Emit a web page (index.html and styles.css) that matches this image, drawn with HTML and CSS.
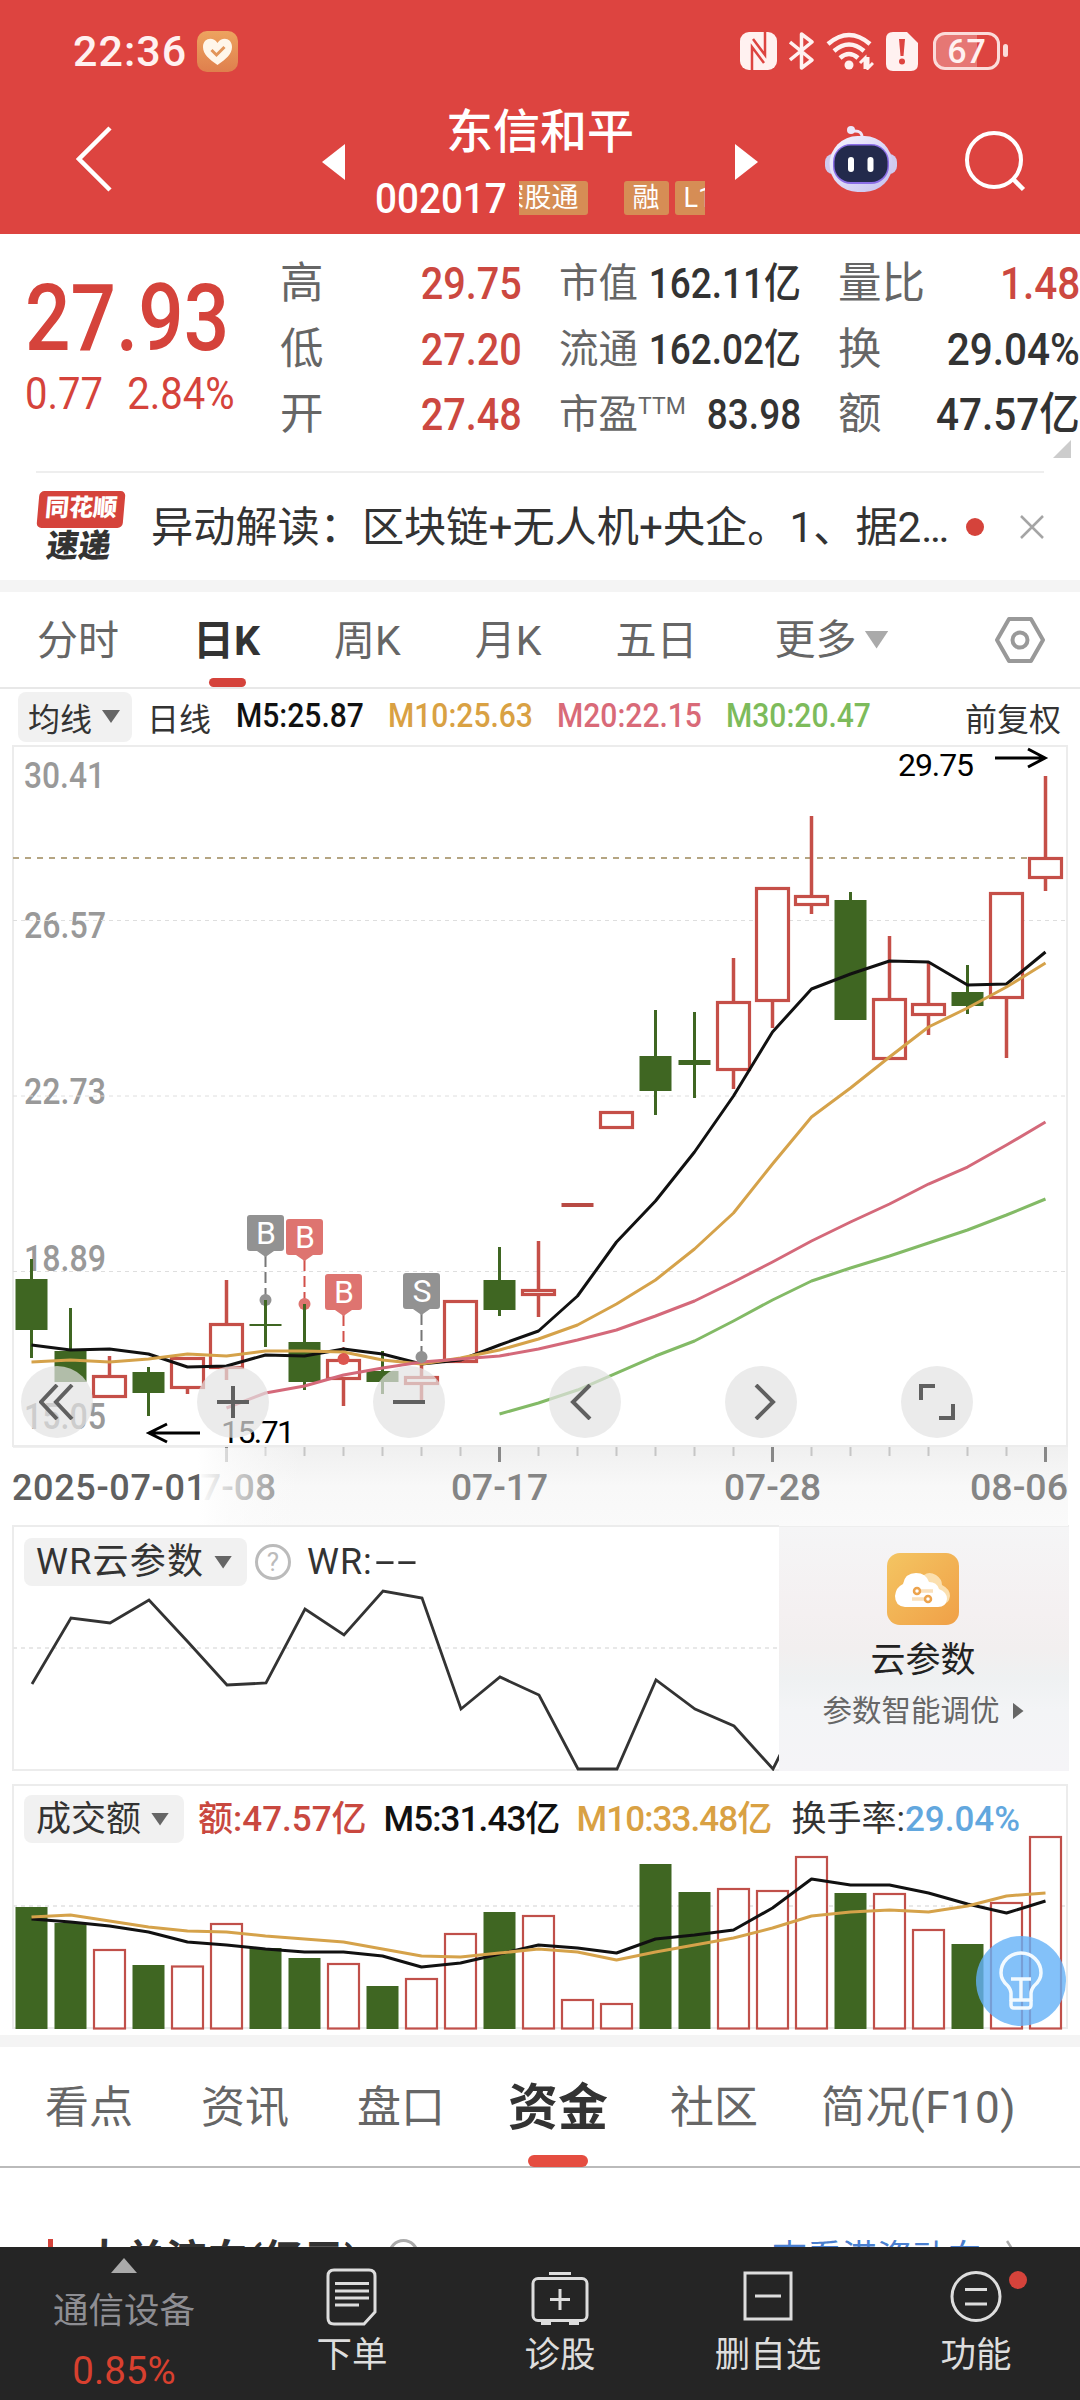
FILE: index.html
```html
<!DOCTYPE html>
<html lang="zh-CN">
<head>
    <meta charset="UTF-8">
    <meta name="viewport" content="width=device-width, initial-scale=1.0">
    <title>东信和平 002017</title>
    <link rel="stylesheet" href="styles.css">
</head>
<body>
    <header class="header">
        <div class="status-bar">
            <span class="time">22:36</span>
            <svg class="health" width="41" height="41" viewBox="0 0 41 41">
                <defs>
                    <linearGradient id="health-bg" x1="0" y1="0" x2="0" y2="1">
                        <stop offset="0" stop-color="#eda35f"/>
                        <stop offset="1" stop-color="#df7f4d"/>
                    </linearGradient>
                </defs>
                <rect width="41" height="41" rx="10" fill="url(#health-bg)"/>
                <path d="M20.500 34C12 28 6 23 6 16C6 7 16 5 20.500 12C25 5 35 7 35 16C35 23 29 28 20.500 34Z" fill="#fff6ea"/>
                <path d="M14.500 19l5 5 8-8" fill="none" stroke="#e2955a" stroke-width="3"/>
            </svg>
            <div class="status-icons">
                <svg width="37" height="38" viewBox="0 0 37 38">
                    <rect x="0" y="0" width="37" height="38" rx="9" fill="#fff1f0"/>
                    <path d="M12 38V15L24 31M25 0V23L13 7" fill="none" stroke="#dd4440" stroke-width="2.500"/>
                </svg>
                <svg width="25" height="38" viewBox="0 0 25 38">
                    <path d="M1 10L23 28L12.500 36V2L23 10L1 28" fill="none" stroke="#fff1f0" stroke-width="3.500" stroke-linejoin="round"/>
                </svg>
                <svg width="48" height="38" viewBox="0 0 48 38">
                    <g fill="none" stroke="#fff1f0" stroke-width="4.500">
                        <path d="M2 12Q23-6 44 12"/>
                        <path d="M8 19Q23 6 38 19"/>
                        <path d="M14 26Q23 18 32 26"/>
                    </g>
                    <circle cx="23" cy="33" r="4.500" fill="#fff1f0"/>
                    <path d="M34 31l5-5v11M42 25v11l5-5" fill="none" stroke="#fff1f0" stroke-width="3"/>
                </svg>
                <svg width="32" height="39" viewBox="0 0 32 39">
                    <path d="M7 0H21L32 11V32Q32 39 25 39H7Q0 39 0 32V7Q0 0 7 0Z" fill="#fff1f0"/>
                    <path d="M13 7H19L17.500 24H14.500Z" fill="#dd4440"/>
                    <circle cx="16" cy="29.500" r="3" fill="#dd4440"/>
                </svg>
                <div class="battery"><span>67</span></div>
            </div>
        </div>
        <div class="nav">
            <svg class="back" width="36" height="68" viewBox="0 0 36 68">
                <path d="M34 3L3 34L34 65" fill="none" stroke="#fff" stroke-width="4.500"/>
            </svg>
            <svg class="prev" width="23" height="36" viewBox="0 0 23 36"><path d="M23 0V36L0 18Z" fill="#fff"/></svg>
            <div class="stock">
                <h1>东信和平</h1>
                <div class="code">
                    <span class="num">002017</span>
                    <div class="tags">
                        <span class="tag first">深股通</span>
                        <span class="tag">融</span>
                        <span class="tag">L1</span>
                    </div>
                </div>
            </div>
            <svg class="next" width="23" height="36" viewBox="0 0 23 36"><path d="M0 0V36L23 18Z" fill="#fff"/></svg>
            <svg class="robot" width="72" height="68" viewBox="0 0 72 68">
                <defs>
                    <linearGradient id="robot-shell" x1="0" y1="0" x2="1" y2="1">
                        <stop offset="0" stop-color="#f6f4ff"/>
                        <stop offset="1" stop-color="#c4bfee"/>
                    </linearGradient>
                </defs>
                <path d="M37 13Q38 4 28 5" fill="none" stroke="#efe6f8" stroke-width="3"/>
                <circle cx="26" cy="4" r="4" fill="#ece8fb"/>
                <rect x="0" y="28" width="72" height="20" rx="8" fill="#d0cbee"/>
                <rect x="4.500" y="10" width="63" height="56" rx="28" fill="url(#robot-shell)"/>
                <rect x="8" y="18" width="56" height="40" rx="18" fill="#8a6de6"/>
                <rect x="9.500" y="19.500" width="53" height="36.500" rx="16" fill="#232a4c"/>
                <rect x="23" y="31" width="6" height="15" rx="3" fill="#fff"/>
                <rect x="42.500" y="31" width="6" height="15" rx="3" fill="#fff"/>
            </svg>
            <svg class="search" width="64" height="64" viewBox="0 0 64 64">
                <circle cx="30" cy="30" r="27" fill="none" stroke="#fff" stroke-width="4"/>
                <path d="M49 49L59.500 59.500" stroke="#fff" stroke-width="4.500"/>
            </svg>
        </div>
    </header>

    <section class="quote">
        <div class="price">
            <div class="last">27.93</div>
            <div class="change"><span>0.77</span><span>2.84%</span></div>
        </div>
        <dl class="col col-a">
            <div><dt>高</dt><dd class="up">29.75</dd></div>
            <div><dt>低</dt><dd class="up">27.20</dd></div>
            <div><dt>开</dt><dd class="up">27.48</dd></div>
        </dl>
        <dl class="col col-b">
            <div><dt>市值</dt><dd>162.11亿</dd></div>
            <div><dt>流通</dt><dd>162.02亿</dd></div>
            <div><dt>市盈<sup>TTM</sup></dt><dd>83.98</dd></div>
        </dl>
        <dl class="col col-c">
            <div><dt>量比</dt><dd class="up">1.48</dd></div>
            <div><dt>换</dt><dd>29.04%</dd></div>
            <div><dt>额</dt><dd>47.57亿</dd></div>
        </dl>
        <i class="expand"></i>
    </section>

    <section class="news">
        <div class="news-logo">
            <span class="logo-top">同花顺</span>
            <span class="logo-bottom">速递</span>
        </div>
        <p>异动解读：区块链+无人机+央企。1、据2<span>...</span></p>
        <i class="dot"></i>
        <svg width="24" height="24" viewBox="0 0 24 24"><path d="M1 1L23 23M23 1L1 23" stroke="#a5a5a5" stroke-width="2.500"/></svg>
    </section>

    <nav class="period-tabs">
        <a>分时</a>
        <a class="active">日K</a>
        <a>周K</a>
        <a>月K</a>
        <a>五日</a>
        <a class="more">更多<i class="caret"></i></a>
        <svg width="50" height="46" viewBox="0 0 50 46">
            <path d="M14 2H36L48 23L36 44H14L2 23Z" fill="none" stroke="#999" stroke-width="4" stroke-linejoin="round"/>
            <circle cx="25" cy="23" r="7.500" fill="none" stroke="#999" stroke-width="4"/>
        </svg>
    </nav>

    <div class="ma-row">
        <span class="pill">均线<i class="caret dark"></i></span>
        <span class="cycle">日线</span>
        <span class="ma m5">M5:25.87</span>
        <span class="ma m10">M10:25.63</span>
        <span class="ma m20">M20:22.15</span>
        <span class="ma m30">M30:20.47</span>
        <span class="adjust">前复权</span>
    </div>

    <section class="kline">
        <svg width="1080" height="782" viewBox="0 744 1080 782">
            <defs>
                <linearGradient id="axis-bg" x1="0" y1="0" x2="0" y2="1">
                    <stop offset="0" stop-color="#f0f0f0"/>
                    <stop offset=".5" stop-color="#f8f8f8"/>
                    <stop offset="1" stop-color="#fafafa"/>
                </linearGradient>
                <linearGradient id="axis-fade">
                    <stop offset="0" stop-color="#fff"/>
                    <stop offset=".64" stop-color="#fff"/>
                    <stop offset=".75" stop-color="#fdfdfd" stop-opacity=".65"/>
                    <stop offset="1" stop-color="#fafafa" stop-opacity="0"/>
                </linearGradient>
            </defs>
            <rect x="13" y="1447" width="1055" height="79" fill="url(#axis-bg)"/>

            <!-- frame and price grid -->
            <rect x="13" y="746" width="1054" height="700" fill="#fff" stroke="#ececec" stroke-width="2"/>
            <g class="axis-label">
                <text x="24" y="788" textLength="81" lengthAdjust="spacingAndGlyphs">30.41</text>
                <text x="24" y="938" textLength="82" lengthAdjust="spacingAndGlyphs">26.57</text>
                <text x="24" y="1104" textLength="82" lengthAdjust="spacingAndGlyphs">22.73</text>
                <text x="24" y="1271" textLength="82" lengthAdjust="spacingAndGlyphs">18.89</text>
                <text x="24" y="1429" textLength="82" lengthAdjust="spacingAndGlyphs">15.05</text>
            </g>
            <path d="M13 920.500H1066M13 1096H1066M13 1271.500H1066" stroke="#dedede" stroke-dasharray="4 4"/>
            <path d="M13 858H1028" stroke="#b5a582" stroke-width="2" stroke-dasharray="6 6"/>

            <!-- buy / sell leaders -->
            <g stroke-width="2" stroke-dasharray="11 5">
                <path d="M265.500 1256V1296M421.500 1314V1352" stroke="#777"/>
                <path d="M304.500 1260V1300M343.500 1315V1354" stroke="#d2504a"/>
            </g>
            <circle cx="265.500" cy="1300" r="6" fill="#929292"/>
            <circle cx="304.500" cy="1304" r="6" fill="#de7470"/>

            <!-- wicks -->
            <path d="M31.500 1259V1358M70.500 1308V1382M148.500 1367V1416M265.500 1300V1347M304.500 1304V1390M382.500 1351V1394M499.500 1247V1316M655.500 1010V1115M694.500 1012V1098M850.500 892V1020M967.500 965V1014" stroke="#3f6622" stroke-width="3"/>
            <path d="M109.500 1356V1376M187.500 1387V1394M226.500 1280V1380M343.500 1378V1406M421.500 1359V1402M538.500 1241V1317M733.500 958V1089M772.500 1000V1028M811.500 816V914M889.500 936V1000M928.500 962V1035M1006.500 997V1058M1045.500 776V891" stroke="#c54f48" stroke-width="3.500"/>

            <!-- bodies -->
            <g fill="#3f6622">
                <rect x="15.500" y="1279" width="32" height="51"/>
                <rect x="54.500" y="1351" width="32" height="31"/>
                <rect x="132.500" y="1372" width="32" height="21"/>
                <rect x="249.500" y="1324" width="32" height="2"/>
                <rect x="288.500" y="1342" width="32" height="40"/>
                <rect x="366.500" y="1371" width="32" height="11"/>
                <rect x="483.500" y="1280" width="32" height="30"/>
                <rect x="639.500" y="1056" width="32" height="35"/>
                <rect x="678.500" y="1060" width="32" height="5"/>
                <rect x="834.500" y="900" width="32" height="120"/>
                <rect x="951.500" y="992" width="32" height="14"/>
            </g>
            <g fill="#fff" stroke="#c54f48" stroke-width="3.200">
                <rect x="93.500" y="1376.500" width="32" height="20"/>
                <rect x="171.500" y="1358.500" width="32" height="29"/>
                <rect x="210.500" y="1324.500" width="32" height="43"/>
                <rect x="327.500" y="1360.500" width="32" height="18"/>
                <rect x="405.500" y="1377.500" width="32" height="6"/>
                <rect x="444.500" y="1301.500" width="32" height="60"/>
                <rect x="522.500" y="1290.500" width="32" height="4"/>
                <rect x="600.500" y="1112.500" width="32" height="15"/>
                <rect x="717.500" y="1002.500" width="32" height="67"/>
                <rect x="756.500" y="888.500" width="32" height="112"/>
                <rect x="795.500" y="896.500" width="32" height="8"/>
                <rect x="873.500" y="999.500" width="32" height="59"/>
                <rect x="912.500" y="1004.500" width="32" height="10"/>
                <rect x="990.500" y="893.500" width="32" height="104"/>
                <rect x="1029.500" y="858.500" width="32" height="19"/>
            </g>
            <rect x="561.500" y="1203" width="32" height="4" fill="#b84a44"/>

            <!-- moving averages -->
            <g fill="none" stroke-width="3" stroke-linejoin="round">
                <polyline stroke="#111" points="31.5,1345 70.5,1350 109.5,1349 148.5,1354 187.5,1367 226.5,1366 265.5,1355 304.5,1356 343.5,1349 382.5,1354 421.5,1364 460.5,1360 499.5,1345 538.5,1331 577.5,1296 616.5,1242 655.5,1201 694.5,1152 733.5,1096 772.5,1032 811.5,989 850.5,974 889.5,961 928.5,962 967.5,985 1006.5,984 1045.5,952"/>
                <polyline stroke="#d5a24a" points="31.5,1362 70.5,1360 109.5,1362 148.5,1359 187.5,1354 226.5,1356 265.5,1351 304.5,1351 343.5,1352 382.5,1360 421.5,1364 460.5,1358 499.5,1350 538.5,1339 577.5,1325 616.5,1304 655.5,1280 694.5,1249 733.5,1213 772.5,1164 811.5,1117 850.5,1088 889.5,1057 928.5,1027 967.5,1008 1006.5,987 1045.5,963"/>
                <polyline stroke="#d4697a" points="226.5,1408 265.5,1393 304.5,1386 343.5,1375 382.5,1368 421.5,1362 460.5,1359 499.5,1356 538.5,1349 577.5,1340 616.5,1330 655.5,1316 694.5,1301 733.5,1282 772.5,1262 811.5,1241 850.5,1222 889.5,1204 928.5,1184 967.5,1167 1006.5,1145 1045.5,1122"/>
                <polyline stroke="#83ba66" points="499.5,1414 538.5,1403 577.5,1390 616.5,1373 655.5,1356 694.5,1341 733.5,1321 772.5,1300 811.5,1281 850.5,1268 889.5,1256 928.5,1243 967.5,1230 1006.5,1215 1045.5,1199"/>
            </g>
            <circle cx="343.500" cy="1359" r="6" fill="#dc5650"/>
            <circle cx="421.500" cy="1357" r="6" fill="#929292"/>

            <!-- buy / sell flags -->
            <g fill="#929292">
                <path d="M250 1215h31q3 0 3 3v30q0 3-3 3h-7l-8.500 6-8.500-6h-7q-3 0-3-3v-30q0-3 3-3z"/>
                <path d="M406 1273h31q3 0 3 3v30q0 3-3 3h-7l-8.500 6-8.500-6h-7q-3 0-3-3v-30q0-3 3-3z"/>
            </g>
            <g fill="#de7470">
                <path d="M289 1219h31q3 0 3 3v30q0 3-3 3h-7l-8.500 6-8.500-6h-7q-3 0-3-3v-30q0-3 3-3z"/>
                <path d="M328 1274h31q3 0 3 3v30q0 3-3 3h-7l-8.500 6-8.500-6h-7q-3 0-3-3v-30q0-3 3-3z"/>
            </g>
            <g class="flag">
                <text x="266" y="1244">B</text>
                <text x="305" y="1248">B</text>
                <text x="344" y="1303">B</text>
                <text x="422" y="1302">S</text>
            </g>

            <!-- high and low -->
            <g class="extreme">
                <text x="898" y="776" textLength="76">29.75</text>
                <text x="221" y="1443" textLength="74">15.71</text>
            </g>
            <g fill="none" stroke="#000" stroke-width="3">
                <path d="M995 758H1044M1028 749L1045 758L1028 767"/>
                <path d="M200 1433H149M167 1424L149 1433L167 1442"/>
            </g>

            <!-- date axis -->
            <path d="M265.500 1447v9M304.500 1447v9M343.500 1447v9M382.500 1447v9M421.500 1447v9M460.500 1447v9M538.500 1447v9M577.500 1447v9M616.500 1447v9M655.500 1447v9M694.500 1447v9M733.500 1447v9M811.500 1447v9M850.500 1447v9M889.500 1447v9M928.500 1447v9M967.500 1447v9M1006.500 1447v9" stroke="#c6c6c6" stroke-width="2"/>
            <path d="M226.500 1447v15M499.500 1447v15M772.500 1447v15M1045.500 1447v15" stroke="#888" stroke-width="3"/>
            <g class="date">
                <text x="179" y="1500" textLength="97" lengthAdjust="spacingAndGlyphs">07-08</text>
                <text x="451" y="1500" textLength="97" lengthAdjust="spacingAndGlyphs">07-17</text>
                <text x="724" y="1500" textLength="97" lengthAdjust="spacingAndGlyphs">07-28</text>
                <text x="970" y="1500" textLength="98" lengthAdjust="spacingAndGlyphs">08-06</text>
            </g>
            <rect x="12" y="1448" width="290" height="77" fill="url(#axis-fade)"/>
            <text class="date first" x="12" y="1500" textLength="194">2025-07-01</text>
        </svg>
        <div class="chart-tools">
            <span><svg width="36" height="36" viewBox="0 0 36 36"><path d="M18 1L2 18L18 35M33 1L17 18L33 35"/></svg></span>
            <span><svg width="36" height="36" viewBox="0 0 36 36"><path d="M18 2V34M2 18H34"/></svg></span>
            <span><svg width="36" height="36" viewBox="0 0 36 36"><path d="M2 18H34"/></svg></span>
            <span><svg width="36" height="36" viewBox="0 0 36 36"><path d="M23 1L6 18L23 35"/></svg></span>
            <span><svg width="36" height="36" viewBox="0 0 36 36"><path d="M13 1L30 18L13 35"/></svg></span>
            <span><svg width="36" height="36" viewBox="0 0 36 36"><path d="M2 16V2H16M34 20V34H20"/></svg></span>
        </div>
    </section>

    <section class="wr">
        <div class="wr-chart">
            <svg width="766" height="245" viewBox="13 1526 766 245">
                <path d="M13 1648H779" stroke="#e8e8e8" stroke-width="2" stroke-dasharray="4 4"/>
                <polyline fill="none" stroke="#333" stroke-width="2.800" points="32,1684 71,1618 110,1623 149,1600 188,1642 227,1685 266,1683 305,1609 344,1635 383,1591 422,1598 461,1709 500,1677 539,1695 578,1769 617,1769 656,1680 695,1709 734,1726 773,1769 781,1753"/>
            </svg>
            <div class="wr-head">
                <span class="pill">WR云参数<i class="caret dark"></i></span>
                <span class="help">?</span>
                <span class="wr-value">WR:<b>--</b></span>
            </div>
        </div>
        <div class="cloud">
            <svg width="72" height="72" viewBox="0 0 72 72">
                <defs>
                    <linearGradient id="cloud-bg" x1="0" y1="0" x2="1" y2="1">
                        <stop offset="0" stop-color="#f4c562"/>
                        <stop offset="1" stop-color="#f0a047"/>
                    </linearGradient>
                </defs>
                <rect width="72" height="72" rx="13" fill="url(#cloud-bg)"/>
                <path d="M24 51Q14 50 14 41Q15 33 22 31Q26 20 37 22Q42 18 49 22Q55 26 55 32Q63 36 63 43Q62 51 55 51Z" fill="#fbdfae"/>
                <path d="M18 54Q8 53 8 43Q9 34 16 31Q18 20 29 20Q39 20 42 29Q50 29 52 36Q60 39 60 46Q59 54 51 54Z" fill="#fff"/>
                <path d="M31 38H46M25 46H40" stroke="#fae0bb" stroke-width="3.500"/>
                <circle cx="30" cy="38" r="3" fill="#fff" stroke="#eca34d" stroke-width="2.500"/>
                <circle cx="41" cy="46" r="3" fill="#fff" stroke="#eca34d" stroke-width="2.500"/>
            </svg>
            <strong>云参数</strong>
            <p>参数智能调优<i></i></p>
        </div>
    </section>

    <section class="volume">
        <div class="vol-head">
            <span class="pill">成交额<i class="caret dark"></i></span>
            <span class="amount">额:47.57亿</span>
            <span class="m5">M5:31.43亿</span>
            <span class="m10">M10:33.48亿</span>
            <span class="turnover">换手率:<b>29.04%</b></span>
        </div>
        <svg width="1056" height="246" viewBox="12 1784 1056 246">
            <rect x="13" y="1785" width="1054" height="243" fill="#fff" stroke="#ececec" stroke-width="2"/>
            <path d="M13 1906H1066" stroke="#e8e8e8" stroke-width="2" stroke-dasharray="4 4"/>
            <g fill="#3f6622">
                <rect x="15.500" y="1907" width="32" height="122"/>
                <rect x="54.500" y="1923" width="32" height="106"/>
                <rect x="132.500" y="1965" width="32" height="64"/>
                <rect x="249.500" y="1948" width="32" height="81"/>
                <rect x="288.500" y="1958" width="32" height="71"/>
                <rect x="366.500" y="1986" width="32" height="43"/>
                <rect x="483.500" y="1912" width="32" height="117"/>
                <rect x="639.500" y="1864" width="32" height="165"/>
                <rect x="678.500" y="1892" width="32" height="137"/>
                <rect x="834.500" y="1893" width="32" height="136"/>
                <rect x="951.500" y="1944" width="32" height="85"/>
            </g>
            <g fill="#fff" stroke="#c0504a" stroke-width="2.200">
                <rect x="94" y="1950" width="31" height="78.500"/>
                <rect x="172" y="1966.500" width="31" height="62"/>
                <rect x="211" y="1924" width="31" height="104.500"/>
                <rect x="328" y="1964" width="31" height="64.500"/>
                <rect x="406" y="1979" width="31" height="49.500"/>
                <rect x="445" y="1934" width="31" height="94.500"/>
                <rect x="523" y="1916" width="31" height="112.500"/>
                <rect x="562" y="2000" width="31" height="28.500"/>
                <rect x="601" y="2004" width="31" height="24.500"/>
                <rect x="718" y="1889" width="31" height="139.500"/>
                <rect x="757" y="1891" width="31" height="137.500"/>
                <rect x="796" y="1857" width="31" height="171.500"/>
                <rect x="874" y="1894" width="31" height="134.500"/>
                <rect x="913" y="1930" width="31" height="98.500"/>
                <rect x="991" y="1903" width="31" height="125.500"/>
                <rect x="1030" y="1837" width="31" height="191.500"/>
            </g>
            <g fill="none" stroke-width="3" stroke-linejoin="round">
                <polyline stroke="#111" points="31.5,1919 70.5,1922 109.5,1926 148.5,1932 187.5,1942 226.5,1945 265.5,1949 304.5,1952 343.5,1952 382.5,1956 421.5,1967 460.5,1963 499.5,1954 538.5,1945 577.5,1948 616.5,1953 655.5,1939 694.5,1935 733.5,1930 772.5,1908 811.5,1879 850.5,1885 889.5,1885 928.5,1893 967.5,1904 1006.5,1913 1045.5,1901"/>
                <polyline stroke="#d5a24a" points="31.5,1917 70.5,1915 109.5,1921 148.5,1927 187.5,1931 226.5,1932 265.5,1936 304.5,1939 343.5,1942 382.5,1949 421.5,1956 460.5,1957 499.5,1953 538.5,1949 577.5,1952 616.5,1960 655.5,1952 694.5,1945 733.5,1938 772.5,1928 811.5,1916 850.5,1912 889.5,1910 928.5,1912 967.5,1906 1006.5,1896 1045.5,1893"/>
            </g>
        </svg>
        <div class="bulb">
            <svg width="44" height="60" viewBox="0 0 44 60">
                <g fill="none" stroke="#f2faff" stroke-width="3.500" stroke-linejoin="round">
                    <path d="M12 49V42Q12 39 9 35Q2 29 2 22A20 20 0 0 1 42 22Q42 29 35 35Q32 39 32 42V49Z"/>
                    <path d="M12 49V54Q12 57 15 57H29Q32 57 32 54V49M12 28H32M22 28V49"/>
                </g>
            </svg>
        </div>
    </section>

    <nav class="info-tabs">
        <a>看点</a>
        <a>资讯</a>
        <a>盘口</a>
        <a class="active">资金</a>
        <a>社区</a>
        <a class="profile">简况(F10)</a>
    </nav>

    <section class="flow">
        <h2>大单流向(亿元)</h2>
        <i class="ring"></i>
        <a>查看港资动向</a>
        <svg width="12" height="30" viewBox="0 0 12 30"><path d="M1 1L10 15L1 29" fill="none" stroke="#aaa" stroke-width="2.500"/></svg>
    </section>

    <footer class="toolbar">
        <div class="sector">
            <i class="up-arrow"></i>
            <span class="name">通信设备</span>
            <span class="pct">0.85%</span>
        </div>
        <div class="tool">
            <svg width="60" height="60" viewBox="0 0 60 60">
                <path d="M12 4H47Q53 4 53 10V46L42 58H12Q6 58 6 52V10Q6 4 12 4Z"/>
                <path d="M13 17.500H47M13 25H47M13 32H47M13 39H37"/>
            </svg>
            <span>下单</span>
        </div>
        <div class="tool">
            <svg width="60" height="60" viewBox="0 0 60 60">
                <rect x="3" y="12.500" width="54" height="42" rx="5"/>
                <path d="M19 7.500H41M30 23V44M20 33.500H40"/>
                <path d="M11 57H21M39 57H49" stroke-width="4"/>
            </svg>
            <span>诊股</span>
        </div>
        <div class="tool">
            <svg width="60" height="60" viewBox="0 0 60 60">
                <rect x="7" y="7" width="46" height="46"/>
                <path d="M17 30H43"/>
            </svg>
            <span>删自选</span>
        </div>
        <div class="tool">
            <svg width="60" height="60" viewBox="0 0 60 60">
                <circle cx="30" cy="30.500" r="24"/>
                <path d="M19 23.500H41M19 38H41"/>
            </svg>
            <span>功能</span>
            <i class="badge"></i>
        </div>
    </footer>
</body>
</html>
```
FILE: styles.css
```css
* {
    box-sizing: border-box;
    margin: 0;
    padding: 0;
}
body {
    width: 1080px;
    height: 2400px;
    overflow: hidden;
    display: flex;
    flex-direction: column;
    font-family: Roboto, 'Noto Sans CJK SC', sans-serif;
    color: #333;
    background: #fff;
}
svg {
    display: block;
    flex: none;
}
i {
    display: block;
}
body > * {
    flex: none;
}

/* header */
.header {
    height: 234px;
    background: #dd4440;
    color: #fff;
}
.status-bar {
    display: flex;
    align-items: center;
    height: 102px;
    padding: 0 71px 0 73px;
}
.time {
    width: 124px;
    font-size: 43px;
    font-weight: 500;
    letter-spacing: 1px;
    color: #fff1f0;
}
.status-icons {
    display: flex;
    align-items: center;
    gap: 12px;
    margin-left: auto;
}
.battery {
    position: relative;
    width: 67px;
    height: 38px;
    margin: 0 9px 0 3px;
    border: 3px solid #fbdcda;
    border-radius: 12px;
    background: linear-gradient(90deg, #e67774 67%, transparent 67%);
    font-size: 34px;
    font-weight: 500;
    line-height: 32px;
    text-align: center;
    color: #fff1f0;
}
.battery::after {
    content: '';
    position: absolute;
    right: -11px;
    top: 9px;
    width: 5px;
    height: 13px;
    border-radius: 3px;
    background: #fbdcda;
}
.nav {
    display: flex;
    height: 132px;
}
.back {
    margin: 23px 0 0 76px;
}
.prev {
    margin: 42px 0 0 210px;
}
.next {
    margin-top: 42px;
}
.stock {
    width: 330px;
    margin: 0 30px;
}
.stock h1 {
    height: 62px;
    padding-top: 3px;
    font-size: 47px;
    font-weight: 500;
    line-height: 54px;
    text-align: center;
}
.code {
    display: flex;
    height: 68px;
}
.code .num {
    width: 144px;
    padding-top: 11px;
    font-size: 42px;
    font-weight: 500;
    line-height: 48px;
    transform: scaleX(.92);
    transform-origin: left;
}
.tags {
    display: flex;
    align-items: flex-start;
    gap: 6px;
    width: 187px;
    margin-top: 17px;
    overflow: hidden;
}
.tag {
    flex: none;
    height: 34px;
    padding: 0 9px;
    border-radius: 3px;
    background: #d68d55;
    font-size: 27px;
    line-height: 35px;
}
.tag.first {
    margin: 0 30px 0 -30px;
}
.robot {
    margin: 24px 0 0 67px;
}
.search {
    margin: 28px 0 0 67px;
}

/* quote */
.quote {
    position: relative;
    display: flex;
    height: 237px;
}
.price {
    width: 280px;
    padding: 40px 0 0 25px;
    color: #d5433b;
}
.last {
    height: 89px;
    font-size: 92px;
    font-weight: 500;
    line-height: 89px;
    transform: scaleX(.87);
    transform-origin: left;
}
.change {
    display: flex;
    gap: 27px;
    font-size: 45px;
    line-height: 62px;
    transform: scaleX(.89);
    transform-origin: left;
}
.col {
    width: 242px;
    padding-top: 17px;
    font-size: 43.500px;
    line-height: 65.500px;
    white-space: nowrap;
}
.col div {
    display: flex;
    justify-content: space-between;
}
.col dt {
    color: #666;
}
.col dd {
    margin-left: -30px;
    font-size: 45px;
    font-weight: 500;
    transform: scaleX(.88);
    transform-origin: right;
}
.col .up {
    color: #cc4840;
}
.col-b {
    margin-left: 37px;
    font-size: 39.500px;
}
.col-b dd {
    font-size: 42px;
}
.col-c {
    margin-left: 37px;
}
.col-c dd {
    transform: scaleX(.9);
}
.col sup {
    font-size: 23px;
    line-height: 0;
    vertical-align: 14px;
}
.expand {
    position: absolute;
    right: 9px;
    bottom: 13px;
    width: 18px;
    height: 18px;
    background: #ccc;
    clip-path: polygon(100% 0, 100% 100%, 0 100%);
}

/* news */
.news {
    display: flex;
    align-items: center;
    height: 109px;
    margin: 0 36px;
    border-top: 2px solid #eee;
}
.news-logo {
    width: 115px;
    padding-left: 2px;
}
.logo-top {
    display: block;
    width: 86px;
    height: 37px;
    border-radius: 5px;
    background: #d5433b;
    transform: skewX(-5deg);
    color: #fff;
    font-size: 24px;
    font-weight: 900;
    line-height: 35px;
    text-align: center;
}
.logo-bottom {
    display: block;
    width: 82px;
    height: 35px;
    transform: skewX(-8deg);
    font-size: 32px;
    font-weight: 900;
    line-height: 36px;
    text-align: center;
}
.news p {
    width: 793px;
    margin-bottom: 7px;
    font-size: 42.200px;
    white-space: nowrap;
}
.news p span {
    letter-spacing: -2.500px;
}
.dot {
    width: 18px;
    height: 18px;
    margin: 0 36px 0 22px;
    border-radius: 50%;
    background: #d5433b;
}

/* period tabs */
.period-tabs {
    display: flex;
    align-items: center;
    height: 109px;
    padding: 0 35px 0 37px;
    border-top: 12px solid #f4f4f4;
    border-bottom: 2px solid #e8e8e8;
    font-size: 41px;
    color: #666;
}
.period-tabs a {
    position: relative;
    flex: none;
    height: 95px;
    line-height: 98px;
}
.period-tabs a + a {
    margin-left: 74px;
}
.period-tabs .active {
    font-weight: 700;
    color: #333;
}
.period-tabs .active::after {
    content: '';
    position: absolute;
    left: 50%;
    bottom: 0;
    width: 37px;
    height: 9px;
    margin-left: -18px;
    border-radius: 5px;
    background: #d5433b;
}
.period-tabs a.more {
    display: flex;
    align-items: center;
    gap: 8px;
    margin-left: 77px;
}
.period-tabs svg {
    margin-left: auto;
}
.caret {
    width: 24px;
    height: 18px;
    background: #aaa;
    clip-path: polygon(0 0, 100% 0, 50% 100%);
}
.caret.dark {
    width: 18px;
    height: 13px;
    background: #666;
}

/* moving average legend */
.ma-row {
    display: flex;
    align-items: center;
    height: 55px;
    padding: 0 19px 0 18px;
    font-size: 32px;
    white-space: nowrap;
}
.pill {
    display: flex;
    align-items: center;
    gap: 10px;
    height: 50px;
    border-radius: 8px;
    background: #f1f1f1;
}
.ma-row .pill {
    width: 114px;
    padding-left: 10px;
}
.cycle {
    width: 89px;
    margin-left: 15px;
}
.ma {
    width: 169px;
    font-size: 33px;
    font-weight: 500;
    line-height: 1.3;
    transform: scaleX(.91);
    transform-origin: left;
}
.ma.m5 {
    width: 152px;
}
.m5 {
    color: #111;
}
.m10 {
    color: #d9a143;
}
.m20 {
    color: #d96a78;
}
.m30 {
    color: #7dbb5b;
}
.adjust {
    margin-left: auto;
}

/* candlestick chart */
.kline {
    position: relative;
    height: 782px;
}
.axis-label,
.date {
    font-size: 36px;
    font-weight: 500;
    fill: #999;
}
.date {
    fill: #858585;
}
.date.first {
    fill: #606060;
}
.flag {
    font-size: 32px;
    fill: #fff;
    text-anchor: middle;
}
.extreme {
    font-size: 32px;
    fill: #000;
}
.chart-tools {
    position: absolute;
    left: 21px;
    top: 622px;
    display: flex;
    gap: 104px;
}
.chart-tools span {
    display: flex;
    align-items: center;
    justify-content: center;
    width: 72px;
    height: 72px;
    border-radius: 50%;
    background: rgba(227, 227, 227, .7);
}
.chart-tools path {
    fill: none;
    stroke: #606060;
    stroke-width: 4;
}

/* WR */
.wr {
    display: flex;
    height: 246px;
    margin: -1px 11px 0 12px;
}
.wr-chart {
    position: relative;
    width: 767px;
    border: 2px solid #ececec;
    border-right: 0;
    background: #fff;
}
.wr-chart > svg {
    margin: -1px 0 0 -1px;
}
.wr-head {
    position: absolute;
    left: 10px;
    top: 11px;
    display: flex;
    align-items: center;
    font-size: 36px;
    line-height: 48px;
}
.wr-head .pill,
.vol-head .pill {
    height: 48px;
    padding: 0 15px 0 12px;
    white-space: nowrap;
}
.wr-head .pill {
    width: 223px;
    padding-right: 0;
    letter-spacing: 1.200px;
}
.help {
    width: 36px;
    height: 36px;
    margin: 0 16px 0 8px;
    border: 3px solid #bbb;
    border-radius: 50%;
    font-size: 26px;
    line-height: 31px;
    text-align: center;
    color: #bbb;
}
.wr-value {
    letter-spacing: 1px;
}
.wr-value b {
    display: inline-block;
    margin-left: 2px;
    font-weight: 400;
    transform: scaleX(2);
    transform-origin: left;
}
.cloud {
    display: flex;
    flex-direction: column;
    align-items: center;
    width: 290px;
    padding: 26px 2px 0 0;
    border-top: 2px solid #eee;
    background: linear-gradient(#f5f5f6, #f4f0f1 35%, #f2efef 50%, #eff1f2 62%, #f3f4f6 75%, #f5f4f7);
}
.cloud strong {
    margin-top: 15px;
    font-size: 35px;
    font-weight: 400;
    line-height: 42px;
    color: #222;
}
.cloud p {
    display: flex;
    align-items: center;
    gap: 13px;
    margin-top: 8px;
    font-size: 29.500px;
    line-height: 42px;
    color: #666;
}
.cloud p i {
    width: 11px;
    height: 17px;
    background: #666;
    clip-path: polygon(0 0, 100% 50%, 0 100%);
}

/* turnover volume */
.volume {
    position: relative;
    height: 264px;
    padding: 13px 12px 0;
}
.vol-head {
    position: absolute;
    left: 24px;
    top: 24px;
    display: flex;
    align-items: center;
    height: 48px;
    font-size: 35px;
    font-weight: 500;
    line-height: 47px;
    white-space: nowrap;
}
.vol-head .pill {
    font-weight: 400;
}
.vol-head .amount {
    margin-left: 14px;
    color: #c9483f;
}
.vol-head .m5,
.vol-head .m10 {
    margin-left: 17px;
    letter-spacing: -.900px;
}
.turnover {
    margin-left: 20px;
    font-weight: 400;
}
.turnover b {
    font-weight: 500;
    color: #62a7de;
}
.bulb {
    position: absolute;
    left: 976px;
    top: 165px;
    display: flex;
    align-items: center;
    justify-content: center;
    width: 90px;
    height: 90px;
    border-radius: 50%;
    background: rgba(100, 178, 248, .8);
}

/* info tabs */
.info-tabs {
    display: flex;
    align-items: center;
    height: 133px;
    padding-left: 45px;
    border-top: 12px solid #f4f4f4;
    border-bottom: 2px solid #bbb;
    font-size: 44px;
    color: #666;
}
.info-tabs a {
    position: relative;
    height: 119px;
    margin-right: 68px;
    line-height: 123px;
    white-space: nowrap;
}
.info-tabs .active {
    margin: 0 62px 0 -5px;
    font-size: 50px;
    font-weight: 700;
    color: #333;
}
.info-tabs .active + a {
    margin-right: 63px;
}
.info-tabs .profile {
    letter-spacing: .4px;
}
.info-tabs .active::after {
    content: '';
    position: absolute;
    left: 50%;
    bottom: -1px;
    width: 60px;
    height: 12px;
    margin-left: -30px;
    border-radius: 6px;
    background: #e54d40;
}

/* fund flow, mostly hidden behind the toolbar */
.flow {
    display: flex;
    align-items: flex-start;
    height: 79px;
    padding: 71px 62px 0 48px;
    overflow: hidden;
}
.flow h2 {
    height: 40px;
    padding-left: 31px;
    border-left: 5px solid #d5433b;
    font-size: 41px;
    line-height: 42px;
    white-space: nowrap;
}
.ring {
    width: 31px;
    height: 31px;
    margin: 0 0 0 29px;
    border: 3px solid #aaa;
    border-radius: 50%;
}
.flow a {
    margin-left: auto;
    font-size: 35px;
    line-height: 40px;
    color: #4a7fd0;
}
.flow svg {
    margin: 1px 0 0 24px;
}

/* toolbar */
.toolbar {
    display: flex;
    height: 153px;
    background: #252525;
}
.sector {
    display: flex;
    flex-direction: column;
    align-items: center;
    width: 248px;
    padding-top: 11px;
    font-size: 35.500px;
}
.up-arrow {
    width: 26px;
    height: 15px;
    background: #aaa;
    clip-path: polygon(50% 0, 100% 100%, 0 100%);
}
.sector .name {
    margin-top: 15px;
    line-height: 46px;
    color: #8e8e93;
}
.sector .pct {
    margin-top: 14px;
    font-size: 38.500px;
    line-height: 46px;
    color: #d8402f;
}
.tool {
    position: relative;
    display: flex;
    flex-direction: column;
    align-items: center;
    width: 208px;
    padding-top: 19px;
    font-size: 35.500px;
    line-height: 46px;
    color: #ddd;
}
.tool svg {
    fill: none;
    stroke: #ddd;
    stroke-width: 3;
}
.tool span {
    margin-top: 6px;
}
.badge {
    position: absolute;
    left: 137px;
    top: 24px;
    width: 18px;
    height: 18px;
    border-radius: 50%;
    background: #d5433b;
}
```
